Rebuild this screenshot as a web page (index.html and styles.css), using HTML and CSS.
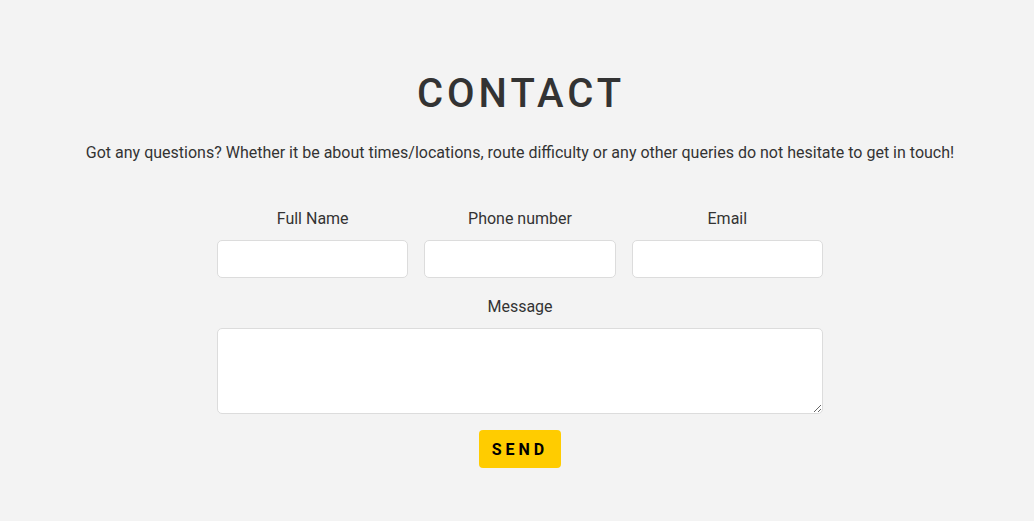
FILE: index.html
```html
<!DOCTYPE html>
<html>
<head>
<meta charset="utf-8">
<link rel="stylesheet" href="styles.css">
</head>
<body>
<section class="contact">
  <h1 class="title">CONTACT</h1>
  <p class="intro">Got any questions? Whether it be about times/locations, route difficulty or any other queries do not hesitate to get in touch!</p>
  <form class="form">
    <div class="row">
      <label class="field"><span class="label">Full Name</span><input class="input" type="text"></label>
      <label class="field"><span class="label">Phone number</span><input class="input" type="text"></label>
      <label class="field"><span class="label">Email</span><input class="input" type="text"></label>
    </div>
    <label class="field message"><span class="label">Message</span><textarea class="textarea"></textarea></label>
    <button class="send" type="button">SEND</button>
  </form>
</section>
</body>
</html>
```
FILE: styles.css
```css
html, body {
  margin: 0;
  padding: 0;
  background: #f3f3f3;
}
body {
  font-family: Roboto, "Liberation Sans", sans-serif;
  color: #333;
}
.contact {
  display: flex;
  flex-direction: column;
  align-items: center;
  padding: 70px 0 0 6px;
}
.title {
  margin: 0;
  font-size: 40px;
  font-weight: 500;
  letter-spacing: 4px;
  line-height: 48px;
  padding-left: 2px;
}
.intro {
  margin: 24px 0 0;
  font-size: 16px;
  line-height: 22px;
}
.form {
  width: 606px;
  margin-top: 45px;
  display: flex;
  flex-direction: column;
  align-items: center;
}
.row {
  width: 100%;
  display: grid;
  grid-template-columns: 1fr 1fr 1fr;
  gap: 16px;
}
.field {
  width: 100%;
  display: flex;
  flex-direction: column;
  align-items: center;
  gap: 11px;
}
.message {
  margin-top: 19px;
}
.label {
  font-size: 16px;
  line-height: 20px;
}
.input, .textarea {
  box-sizing: border-box;
  width: 100%;
  border: 1px solid #dcdcdc;
  border-radius: 5px;
  background: #fff;
  margin: 0;
  font: inherit;
}
.input { height: 38px; }
.textarea { height: 86px; resize: vertical; display: block; }
.send {
  margin-top: 16px;
  width: 82px;
  height: 38px;
  border: none;
  border-radius: 4px;
  background: #ffcc00;
  color: #000;
  font-family: Roboto, "Liberation Sans", sans-serif;
  font-weight: 700;
  font-size: 16px;
  letter-spacing: 4px;
  padding: 0;
}
```
